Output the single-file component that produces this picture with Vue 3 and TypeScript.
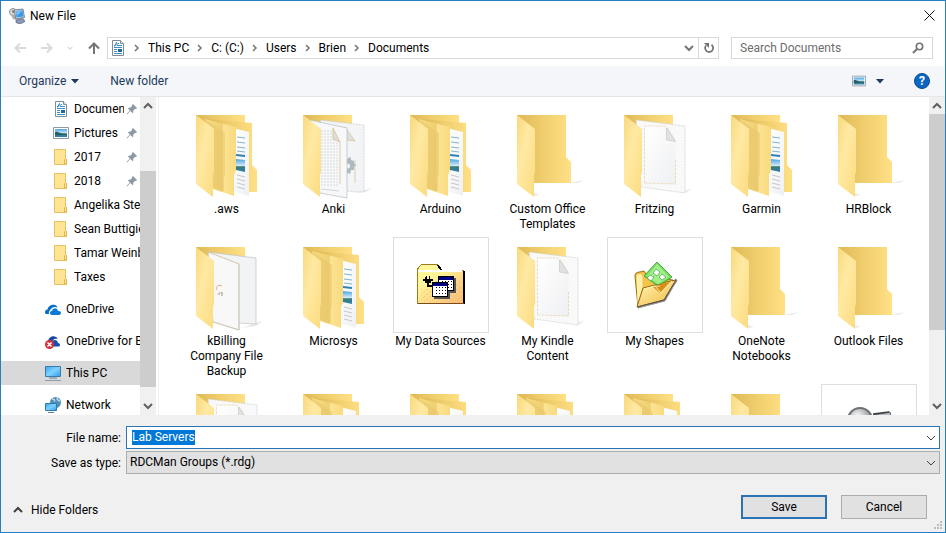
<script setup lang="ts">
import { nextTick, onMounted, ref } from 'vue'

type TreeIcon = 'document' | 'pictures' | 'folder' | 'onedrive' | 'onedrive-error' | 'pc' | 'network'
type FileIcon = 'docs' | 'pages' | 'empty' | 'sheet' | 'blank' | 'data' | 'shapes' | 'search'

interface TreeItem { name: string; icon: TreeIcon; pinned?: boolean; selected?: boolean }
interface FileItem { name: string; icon: FileIcon }

const crumbs: string[] = ['This PC', 'C: (C:)', 'Users', 'Brien', 'Documents']

const quickAccess: TreeItem[] = [
  { name: 'Documents', icon: 'document', pinned: true },
  { name: 'Pictures', icon: 'pictures', pinned: true },
  { name: '2017', icon: 'folder', pinned: true },
  { name: '2018', icon: 'folder', pinned: true },
  { name: 'Angelika Stein', icon: 'folder' },
  { name: 'Sean Buttigieg', icon: 'folder' },
  { name: 'Tamar Weinberg', icon: 'folder' },
  { name: 'Taxes', icon: 'folder' },
]

const places: TreeItem[] = [
  { name: 'OneDrive', icon: 'onedrive' },
  { name: 'OneDrive for Business', icon: 'onedrive-error' },
  { name: 'This PC', icon: 'pc', selected: true },
  { name: 'Network', icon: 'network' },
]

const files: FileItem[] = [
  { name: '.aws', icon: 'docs' },
  { name: 'Anki', icon: 'pages' },
  { name: 'Arduino', icon: 'docs' },
  { name: 'Custom Office Templates', icon: 'empty' },
  { name: 'Fritzing', icon: 'sheet' },
  { name: 'Garmin', icon: 'docs' },
  { name: 'HRBlock', icon: 'empty' },
  { name: 'kBilling Company File Backup', icon: 'blank' },
  { name: 'Microsys', icon: 'docs' },
  { name: 'My Data Sources', icon: 'data' },
  { name: 'My Kindle Content', icon: 'sheet' },
  { name: 'My Shapes', icon: 'shapes' },
  { name: 'OneNote Notebooks', icon: 'empty' },
  { name: 'Outlook Files', icon: 'empty' },
  { name: '', icon: 'sheet' },
  { name: '', icon: 'docs' },
  { name: '', icon: 'docs' },
  { name: '', icon: 'docs' },
  { name: '', icon: 'docs' },
  { name: '', icon: 'empty' },
  { name: '', icon: 'search' },
]

const framed = (icon: FileIcon): boolean => icon === 'data' || icon === 'shapes' || icon === 'search'

const fileName = ref('Lab Servers')
const query = ref('')
const nameInput = ref<HTMLInputElement | null>(null)

onMounted(async () => {
  await nextTick()
  nameInput.value?.focus()
  nameInput.value?.select()
})
</script>

<template>
  <div class="dialog">
    <svg class="defs" width="0" height="0" aria-hidden="true">
      <defs>
        <linearGradient id="flap" x1="0" y1="0" x2="1" y2="1">
          <stop offset="0" stop-color="#f8d97c" />
          <stop offset=".4" stop-color="#ffe9a3" />
          <stop offset="1" stop-color="#fbdb7f" />
        </linearGradient>
        <linearGradient id="back" x1="0" y1="0" x2="1" y2="0">
          <stop offset="0" stop-color="#dfb755" />
          <stop offset=".45" stop-color="#efcd6c" />
          <stop offset="1" stop-color="#ffe085" />
        </linearGradient>
        <linearGradient id="inner" x1="0" y1="0" x2="1" y2="0">
          <stop offset="0" stop-color="#f9dd84" />
          <stop offset=".55" stop-color="#eed073" />
          <stop offset=".6" stop-color="#fce394" />
          <stop offset="1" stop-color="#f9da7d" />
        </linearGradient>
        <linearGradient id="paper" x1="0" y1="0" x2="1" y2="1">
          <stop offset="0" stop-color="#ffffff" />
          <stop offset="1" stop-color="#eff0f2" />
        </linearGradient>
        <linearGradient id="photo" x1="0" y1="0" x2="0" y2="1">
          <stop offset="0" stop-color="#4ba4e4" />
          <stop offset=".5" stop-color="#cfe8f6" />
          <stop offset=".6" stop-color="#3c7a74" />
          <stop offset="1" stop-color="#2f81b4" />
        </linearGradient>
        <linearGradient id="screen" x1="0" y1="0" x2="1" y2="1">
          <stop offset="0" stop-color="#37a8ee" />
          <stop offset=".5" stop-color="#7fd2ff" />
          <stop offset="1" stop-color="#2e9ce8" />
        </linearGradient>
        <linearGradient id="gold" x1="0" y1="0" x2="1" y2="1">
          <stop offset="0" stop-color="#fff6bb" />
          <stop offset="1" stop-color="#f3b93c" />
        </linearGradient>
        <linearGradient id="manila" x1="0" y1="0" x2="1" y2="1">
          <stop offset=".3" stop-color="#fff79a" />
          <stop offset="1" stop-color="#f9b873" />
        </linearGradient>
        <radialGradient id="lens" cx=".4" cy=".35">
          <stop offset="0" stop-color="#ffffff" />
          <stop offset="1" stop-color="#9a9da2" />
        </radialGradient>
        <pattern id="dither" width="6" height="5" patternUnits="userSpaceOnUse">
          <path d="M0 0h1v1H0zM3 2h2v1H3zM1 4h1v1H1z" fill="#fbc08a" />
          <path d="M4 0h1v1H4zM1 2h1v1H1z" fill="#ffe07a" />
        </pattern>

        <symbol id="i-document" viewBox="0 0 16 16">
          <path d="M2.500.5h8l3 3v12h-11z" fill="#fff" stroke="#7f8b95" />
          <path d="M10.500.5v3h3" fill="#e5eaee" stroke="#7f8b95" />
          <path d="M4 5.500h1.500M8 3.500h1M8 5.500h4M4 7.500h8M4 9.500h3M4 11.500h3M4 13.500h8" stroke="#3e8fc5" />
          <path d="M4.500 6.500L6.500 2.500 7.500 6" fill="none" stroke="#1d86d6" />
          <path d="M8 9h4v3H8z" fill="#1c6d9e" />
        </symbol>
        <symbol id="i-pictures" viewBox="0 0 16 16">
          <path d="M.5 2.500h15v11H.5z" fill="#fff" stroke="#8e9aa3" />
          <path d="M2 4h12v8H2z" fill="url(#photo)" />
          <path d="M2 7c3-1 4 2 12 2v1c-6-1-8 1-12 0z" fill="#25606a" />
        </symbol>
        <symbol id="i-folder" viewBox="0 0 16 16">
          <path d="M1.500.5h11v9l1 1v5h-12z" fill="#ffe493" stroke="#e4c062" />
          <path d="M11.500 15v-4.500l1-1 1 1V15z" fill="#ffe493" stroke="#dfb751" />
        </symbol>
        <symbol id="i-onedrive" viewBox="0 0 16 16">
          <path d="M0 11.500c0-2 1-3 2.500-3C3 5 7 3 10 4c1.500.5 2 1.500 2.500 2.500C9 5 6 7 5 9.500 4 10 3.500 12 4.200 13H2C.8 13 0 12.500 0 11.500z" fill="#0a6fc7" />
          <path d="M5 12c0-1.500 1-2 2-2 .5-3 5-4 6 0 2-.3 3 .7 3 1.800 0 1.200-.8 2.200-2 2.200H7c-1.200 0-2-.7-2-2z" fill="#0f7ad6" />
        </symbol>
        <symbol id="i-onedrive-error" viewBox="0 0 16 16">
          <path d="M3 9c0-4 4-7 8-5 1 .5 1.500 1 1.500 2C9 5 8 7 7 9z" fill="#17489c" />
          <path d="M6 12c0-5 6-7 7-2 1.500.2 2 1 2 2s-.7 1.500-2 1.500H7z" fill="#174fae" />
          <circle cx="4.500" cy="11.500" r="4.500" fill="#d42f38" />
          <path d="M2.500 9.500l4 4m0-4l-4 4" stroke="#fff" stroke-width="1.500" />
        </symbol>
        <symbol id="i-pc" viewBox="0 0 16 16">
          <path d="M.5 1.500h15v10H.5z" fill="url(#screen)" stroke="#3c7ba8" />
          <path d="M4 13h8" stroke="#5d8299" />
          <path d="M0 15.500h16" stroke="#8aa0ae" />
        </symbol>
        <symbol id="i-network" viewBox="0 0 16 16">
          <circle cx="10.500" cy="5.500" r="5.500" fill="#4f8fb8" />
          <path d="M7 2c2 0 3 1 2.500 2.500M12 1c0 1.500 1 2.500 3 3" fill="none" stroke="#bcd9e6" stroke-width="1.500" />
          <path d="M.5 6.500h11v7H.5z" fill="url(#screen)" stroke="#3279a8" />
          <path d="M3 15.500h6" stroke="#5d8299" />
        </symbol>
        <symbol id="i-pin" viewBox="0 0 12 12">
          <path d="M7 1l4 4-1 1-.8-.2-2 2c.3 1 .1 1.800-.5 2.500L4.500 8 1 11.500.5 11 4 7.500 1.700 5.300c.8-.7 1.600-.8 2.500-.5l2-2L6 2z" fill="#8d99a6" />
        </symbol>
        <symbol id="i-down" viewBox="0 0 10 10">
          <path d="M1 3l4 4 4-4" fill="none" stroke="currentColor" stroke-width="2" />
        </symbol>
        <symbol id="i-thin-down" viewBox="0 0 10 10">
          <path d="M1 3l4 4 4-4" fill="none" stroke="currentColor" />
        </symbol>
        <symbol id="i-up" viewBox="0 0 10 10">
          <path d="M1 7l4-4 4 4" fill="none" stroke="currentColor" stroke-width="2" />
        </symbol>
        <symbol id="i-right" viewBox="0 0 6 10">
          <path d="M1 2l3 3-3 3" fill="none" stroke="currentColor" stroke-width="1.500" />
        </symbol>
        <symbol id="i-triangle" viewBox="0 0 8 5">
          <path d="M0 0h8L4 4.500z" fill="currentColor" />
        </symbol>

        <symbol id="f-empty" viewBox="0 0 96 96">
          <path d="M70 78l14-3-6 3zM34 91l6-1-6-2z" fill="#e9e9e9" />
          <path d="M17 10h49v42l5 5v21H34L17 20z" fill="url(#back)" />
          <path d="M17 10l18 14v43l-1 3v22L17 79z" fill="url(#flap)" />
        </symbol>
        <symbol id="f-docs" viewBox="0 0 96 96">
          <path d="M17 10h49v50H30z" fill="url(#back)" />
          <path d="M28 14l45 4v42l5 5v22H60z" fill="url(#back)" />
          <path d="M54 23l16 4v64l-16-5z" fill="url(#paper)" />
          <path d="M58 32l8 1M58 37l8 1M58 42l8 1M58 46l8 1" stroke="#7fb3d4" />
          <path d="M57 50l9 1" stroke="#2e82b8" stroke-width="2" />
          <path d="M57 54l9 1v12l-9-2z" fill="url(#photo)" />
          <path d="M58 70l8 2M58 74l8 2M58 78l8 2M58 82l8 2" stroke="#c5c8cc" />
          <path d="M26 14l31 8v43l-2 5v21l-21-7z" fill="url(#inner)" />
          <path d="M26 14l20 14v41l-1 3v14l-11-3z" fill="#e6c465" opacity=".5" />
          <path d="M17 10l18 14v43l-1 3v22L17 79z" fill="url(#flap)" />
        </symbol>
        <symbol id="f-sheet" viewBox="0 0 96 96">
          <path d="M76 86l9-3-6 5z" fill="#ececec" />
          <path d="M17 10h49v60H30z" fill="url(#back)" />
          <path d="M29 15l49 6v67l-44-6z" fill="#f9f9f9" stroke="#c9cbcd" stroke-dasharray="2 1" stroke-width=".7" />
          <path d="M37.500 21l22 1 9 14v43l-31-1z" fill="url(#paper)" />
          <path d="M37.500 78V21h20l4 3 7 12M68.500 55v24M37.500 78l31 1" fill="none" stroke="#e0cc9c" stroke-dasharray="3 1" stroke-width=".6" />
          <path d="M59.500 23l9 13.500-9-1.500z" fill="#e2e2e4" stroke="#b9babc" stroke-width=".5" />
          <path d="M17 10l18 14v43l-1 3v22L17 79z" fill="url(#flap)" />
        </symbol>
        <symbol id="f-pages" viewBox="0 0 96 96">
          <path d="M76 86l10-3-6 4-14 1z" fill="#e9e9e9" />
          <path d="M17 10h49v60H30z" fill="url(#back)" />
          <path d="M34 15l44 5v67l-20-1z" fill="#f3f4f6" stroke="#c5c7ca" stroke-dasharray="2 1" stroke-width=".7" />
          <path d="M59 22l10 14-8-1zM69 55v23" fill="#dddee0" stroke="#d9c28b" stroke-width=".7" />
          <path d="M60 53l2 1 1-2 2 1v2l3 1v2l2 2-2 2v3l-3 0-1 4-2-1-2 2z" fill="#aebac2" />
          <circle cx="61.500" cy="61" r="2.500" fill="#f3f4f6" />
          <path d="M24 15l37 8v70l-27-5z" fill="#f7f8f9" stroke="#b8bbbe" stroke-width=".7" />
          <path d="M35 26h13M35 29h13M35 32h13M35 35h14M35 38h18M35 41h18M35 44h18M35 47h18M35 50h18M35 53h18M35 56h18M35 59h18M35 62h18M35 65h18M35 68h18M35 71h18M35 74h18M35 77h18M35 80h18" stroke="#d6d8da" stroke-dasharray="2 1" />
          <path d="M35 84l18 2" stroke="#d4d4d4" />
          <path d="M47 23l7 14-7-3zM54 37v42" fill="#dcdddf" stroke="#d5bc7c" stroke-width=".7" />
          <path d="M17 10l18 14v43l-1 3v22L17 79z" fill="url(#flap)" />
        </symbol>
        <symbol id="f-blank" viewBox="0 0 96 96">
          <path d="M76 86l8-2-7 5-14 2z" fill="#e9e9e9" />
          <path d="M17 10h49v60H30z" fill="url(#back)" />
          <path d="M29 15l48 6v66l-18-1z" fill="#f2f3f4" stroke="#bfc1c4" stroke-width=".7" />
          <path d="M29 15l31 12v66l-26-8z" fill="#f8f8f9" stroke="#d4c7a6" />
          <path d="M60 28v65l-25-8" fill="none" stroke="#c8cacc" stroke-width=".7" />
          <path d="M38 53c-2-4 3-6 5-4M39 58c0-3 3-3 4-1" fill="none" stroke="#e8ad74" />
          <path d="M40 57h1m1 1h2m-1-3v2" stroke="#999" />
          <path d="M17 10l18 14v43l-1 3v22L17 79z" fill="url(#flap)" />
        </symbol>
        <symbol id="f-data" viewBox="0 0 96 96">
          <g shape-rendering="crispEdges">
            <path d="M26 35h46v32H26z" fill="#000" />
            <path d="M24 66V33l2-3 2-2 2-1h13l3 2 2 4h22v33z" fill="url(#manila)" stroke="#9c7c20" />
            <path d="M45 28l3 5M71 34v32" fill="none" stroke="#000" stroke-width="2" />
            <path d="M25 66h46" stroke="#7a4b18" />
            <path d="M28 52h12v-9h29v22H28z" fill="url(#dither)" />
            <path d="M25 34h44" stroke="#fff" stroke-width="2" />
            <path d="M33 39h1v3h2v-3h1v3h3v2h-2v2h-2v2h3v2h-5v-4h-2v-2h-2v-2h2z" fill="#000" />
            <path d="M47 41h16v15H47zM41 47h16v15H41z" fill="#555" />
            <path d="M45 39h16v15H45z" fill="#000" />
            <path d="M46 43h14v10H46z" fill="#fff" />
            <path d="M46 40h14v3H46z" fill="#000084" />
            <path d="M49 44v9m3-9v9m3-9v9m3-9v9" stroke="#000" stroke-dasharray="1 2" />
            <path d="M39 45h16v15H39z" fill="#000" />
            <path d="M40 49h14v10H40z" fill="#fff" />
            <path d="M40 46h14v3H40z" fill="#000084" />
            <path d="M43 50v9m3-9v9m3-9v9m3-9v9" stroke="#000" stroke-dasharray="1 2" />
          </g>
        </symbol>
        <symbol id="f-shapes" viewBox="0 0 96 96">
          <path d="M31 71l27-7 12-21-2-1 2 2-13 18z" fill="#777" stroke="#999" />
          <path d="M28 39c0-3 2-4 5-4l4-1 4 6 25 3-11 18-24 9z" fill="#f2c44c" stroke="#9a6a14" />
          <path d="M29.500 40c0-2 1-3 4-3l2 2v11l-5 17z" fill="#fff0a9" />
          <path d="M50 25l15 15-14 9-14-10z" fill="#79db64" stroke="#45ad3a" />
          <path d="M50 27l12 13-11 7-11-8z" fill="#a1ef8a" />
          <path d="M49 32l4 3-3 4-4-3zM43 38l4 2-3 4-4-3zM55 37l4 3-4 3-3-3z" fill="#fff" stroke="#44a83b" stroke-width=".7" />
          <path d="M36 51l12-3 5 0 6-3 10-2-12 20-27 7z" fill="url(#gold)" stroke="#96640d" />
          <path d="M45 49l8 7 10-11-7 1-4 4z" fill="#d98e16" />
          <path d="M37 52l11-3 6 7 11-12" fill="none" stroke="#fff5b4" />
          <path d="M30 70l27-7 12-20" fill="none" stroke="#555" />
        </symbol>
        <symbol id="f-search" viewBox="0 0 96 96">
          <circle cx="39" cy="36" r="12" fill="url(#lens)" stroke="#6d7075" stroke-width="2" />
          <path d="M52 31l17-3 1 4-18 9z" fill="#b8bcc4" stroke="#5d6168" />
          <path d="M52 30l16-2" stroke="#383c43" stroke-width="1.500" />
        </symbol>
      </defs>
    </svg>

    <header class="titlebar">
      <svg class="app-icon" viewBox="0 0 16 16" aria-hidden="true">
        <circle cx="4" cy="4" r="3.500" fill="#d9dadb" stroke="#8d9093" />
        <path d="M2 7l2 4 3 1V7z" fill="#aaaeb2" />
        <circle cx="4.500" cy="3.500" r="1.500" fill="#777b80" />
        <path d="M5 2l9-1 1.500 8.500L7 11z" fill="#cfd6de" stroke="#7c8894" />
        <path d="M6.500 3l7-.8 1 6.300-7 1z" fill="#3c96ea" />
        <path d="M7 3.500l6-.8-5 5z" fill="#7cc6fb" />
        <path d="M7 12l7-1.500 2 3-5 2.500-4-1.500z" fill="#8c98b8" stroke="#54617f" stroke-width=".7" />
      </svg>
      <h1>New File</h1>
      <button class="close" type="button" aria-label="Close">
        <svg viewBox="0 0 11 11"><path d="M.5.5l10 10m0-10l-10 10" stroke="#111" /></svg>
      </button>
    </header>

    <nav class="navrow" aria-label="Location">
      <div class="history">
        <button type="button" aria-label="Back" disabled>
          <svg class="arrow" viewBox="0 0 12 12"><path d="M12 6H1.500M6 1.500L1.500 6 6 10.500" /></svg>
        </button>
        <button type="button" aria-label="Forward" disabled>
          <svg class="arrow" viewBox="0 0 12 12"><path d="M0 6h10.500M6 1.500L10.500 6 6 10.500" /></svg>
        </button>
        <button type="button" aria-label="Recent locations" disabled>
          <svg class="recent"><use href="#i-down" /></svg>
        </button>
        <button class="up" type="button" aria-label="Up">
          <svg class="arrow" viewBox="0 0 12 12"><path d="M6 12V1.500M1 6.500l5-5 5 5" /></svg>
        </button>
      </div>
      <div class="address">
        <svg class="icon16"><use href="#i-document" /></svg>
        <template v-for="crumb in crumbs" :key="crumb">
          <svg class="sep"><use href="#i-right" /></svg>
          <button type="button">{{ crumb }}</button>
        </template>
        <button class="drop" type="button" aria-label="Previous locations">
          <svg class="chev"><use href="#i-down" /></svg>
        </button>
        <button class="refresh" type="button" aria-label="Refresh">
          <svg viewBox="0 0 12 12">
            <path d="M8.500 2.800A4 4 0 1 1 3 3.500" fill="none" stroke="#757575" stroke-width="1.800" />
            <path d="M1 1h5v5z" fill="#757575" />
          </svg>
        </button>
      </div>
      <label class="search">
        <input v-model="query" type="text" placeholder="Search Documents" aria-label="Search Documents" />
        <svg viewBox="0 0 12 12" aria-hidden="true">
          <circle cx="7.500" cy="4.500" r="3.200" fill="none" stroke="#757575" stroke-width="1.600" />
          <path d="M5.300 6.700L1 11" stroke="#757575" stroke-width="2" />
        </svg>
      </label>
    </nav>

    <div class="toolbar">
      <button type="button">Organize <svg class="tri"><use href="#i-triangle" /></svg></button>
      <button type="button">New folder</button>
      <div class="tools">
        <button type="button" aria-label="Change your view">
          <svg class="view-icon"><use href="#i-pictures" /></svg>
          <svg class="tri"><use href="#i-triangle" /></svg>
        </button>
        <button class="help" type="button" aria-label="Help">?</button>
      </div>
    </div>

    <main class="browser">
      <aside class="tree">
        <ul class="quick">
          <li v-for="item in quickAccess" :key="item.name">
            <a href="#">
              <svg class="icon16"><use :href="`#i-${item.icon}`" /></svg>
              <span>{{ item.name }}</span>
              <svg v-if="item.pinned" class="pin"><use href="#i-pin" /></svg>
            </a>
          </li>
        </ul>
        <ul class="places">
          <li v-for="item in places" :key="item.name" :class="{ selected: item.selected }">
            <a href="#">
              <svg class="icon16"><use :href="`#i-${item.icon}`" /></svg>
              <span>{{ item.name }}</span>
            </a>
          </li>
        </ul>
      </aside>
      <div class="scrollbar tree-scroll">
        <svg class="chev"><use href="#i-up" /></svg>
        <div class="track"><div class="thumb"></div></div>
        <svg class="chev"><use href="#i-down" /></svg>
      </div>
      <section class="files" aria-label="Documents">
        <button v-for="(file, i) in files" :key="i" class="file" type="button">
          <svg class="thumbnail" :class="{ framed: framed(file.icon) }"><use :href="`#f-${file.icon}`" /></svg>
          <span>{{ file.name }}</span>
        </button>
      </section>
      <div class="scrollbar">
        <svg class="chev"><use href="#i-up" /></svg>
        <div class="track"><div class="thumb"></div></div>
        <svg class="chev"><use href="#i-down" /></svg>
      </div>
    </main>

    <footer class="footer">
      <div class="field">
        <label for="file-name">File name:</label>
        <div class="combo active">
          <input id="file-name" ref="nameInput" v-model="fileName" type="text" />
          <svg class="chev"><use href="#i-thin-down" /></svg>
        </div>
      </div>
      <div class="field">
        <label for="file-type">Save as type:</label>
        <div class="combo">
          <select id="file-type">
            <option>RDCMan Groups (*.rdg)</option>
          </select>
          <svg class="chev"><use href="#i-thin-down" /></svg>
        </div>
      </div>
      <div class="actions">
        <button class="hide" type="button"><svg class="chev"><use href="#i-up" /></svg>Hide Folders</button>
        <button class="push primary" type="button">Save</button>
        <button class="push" type="button">Cancel</button>
      </div>
      <svg class="grip" viewBox="0 0 9 9" aria-hidden="true">
        <path d="M6 0h2v2H6zM3 3h2v2H3zM6 3h2v2H6zM0 6h2v2H0zM3 6h2v2H3zM6 6h2v2H6z" fill="#bdbdbd" />
      </svg>
    </footer>
  </div>
</template>

<style>
body {
  margin: 0;
  background: #fff;
}
</style>

<style scoped>
.dialog {
  box-sizing: border-box;
  height: 100vh;
  display: flex;
  flex-direction: column;
  overflow: hidden;
  border: 1px solid #267fc2;
  background: #fff;
  color: #000;
  font: 12px/15px Roboto, "Open Sans", sans-serif;
}
.dialog * {
  box-sizing: border-box;
}
.defs {
  position: absolute;
}
svg {
  display: block;
  flex: none;
}
button,
input,
select {
  font: inherit;
  color: inherit;
  margin: 0;
  padding: 0;
  border: 0;
  background: none;
}
a {
  color: inherit;
  text-decoration: none;
}
ul {
  list-style: none;
  margin: 0;
  padding: 0;
}
.icon16 {
  width: 16px;
  height: 16px;
}
.chev {
  width: 10px;
  height: 10px;
}

.titlebar {
  display: flex;
  align-items: center;
  gap: 5px;
  height: 29px;
  flex: none;
  padding: 0 10px 0 8px;
}
.app-icon {
  width: 16px;
  height: 16px;
}
.titlebar h1 {
  flex: 1;
  margin: 0;
  padding-top: 2px;
  font: inherit;
}
.close svg {
  width: 11px;
  height: 11px;
}

.navrow {
  display: flex;
  align-items: center;
  height: 36px;
  flex: none;
  padding: 0 12px 0 13px;
}
.history {
  display: flex;
  align-items: center;
  justify-content: space-between;
  width: 86px;
  margin-right: 7px;
  color: #d9d9d9;
}
.arrow {
  width: 12px;
  height: 12px;
  fill: none;
  stroke: currentColor;
  stroke-width: 2;
}
.recent {
  width: 6px;
  height: 6px;
}
.up {
  color: #757575;
}
.address {
  display: flex;
  align-items: center;
  gap: 8px;
  flex: 1;
  height: 22px;
  padding-left: 2px;
  border: 1px solid #d9d9d9;
}
.sep {
  width: 6px;
  height: 10px;
  color: #757575;
}
.drop {
  margin-left: auto;
  color: #757575;
}
.refresh {
  align-self: stretch;
  display: flex;
  align-items: center;
  justify-content: center;
  width: 20px;
  margin-left: -4px;
  border-left: 1px solid #d9d9d9;
}
.refresh svg {
  width: 12px;
  height: 12px;
}
.search {
  display: flex;
  align-items: center;
  width: 202px;
  height: 22px;
  margin-left: 12px;
  padding: 0 8px;
  border: 1px solid #d9d9d9;
}
.search input {
  flex: 1;
  min-width: 0;
  outline: 0;
}
.search input::placeholder {
  color: #6d6d6d;
  opacity: 1;
}
.search svg {
  width: 12px;
  height: 12px;
}

.toolbar {
  display: flex;
  align-items: center;
  gap: 31px;
  height: 31px;
  flex: none;
  padding: 0 15px 0 18px;
  border-bottom: 1px solid #e4e7ea;
  background: #f4f6f9;
  color: #1e395b;
}
.toolbar button {
  display: flex;
  align-items: center;
  gap: 5px;
}
.tri {
  width: 8px;
  height: 5px;
}
.tools {
  display: flex;
  align-items: center;
  gap: 30px;
  margin-left: auto;
}
.tools button {
  gap: 10px;
}
.view-icon {
  width: 14px;
  height: 14px;
}
.toolbar .help {
  justify-content: center;
  width: 16px;
  height: 16px;
  border: 1px solid #084f94;
  border-radius: 50%;
  background: #0a66c2;
  color: #fff;
  font-weight: 700;
}

.browser {
  display: flex;
  flex: 1;
  min-height: 0;
}
.tree {
  width: 139px;
  flex: none;
  overflow: hidden;
}
.tree a {
  display: flex;
  align-items: center;
  gap: 5px;
  height: 24px;
  white-space: nowrap;
}
.tree span {
  flex: 1;
  min-width: 0;
  overflow: hidden;
}
.quick a {
  padding-left: 52px;
}
.pin {
  width: 12px;
  height: 12px;
  margin: 0 2px 0 -3px;
}
.places {
  display: grid;
  gap: 8px;
  padding-top: 8px;
}
.places a {
  padding-left: 44px;
}
.selected {
  background: #d9d9d9;
}
.scrollbar {
  display: flex;
  flex-direction: column;
  align-items: center;
  justify-content: space-between;
  width: 16px;
  flex: none;
  padding: 4px 0;
  background: #f0f0f0;
  color: #606060;
}
.track {
  flex: 1;
  width: 100%;
  margin: 3px 0;
}
.thumb {
  height: 76%;
  background: #cdcdcd;
}
.tree-scroll {
  margin-right: 2px;
}
.tree-scroll .track {
  display: flex;
  flex-direction: column;
  justify-content: flex-end;
  padding-bottom: 11px;
}
.tree-scroll .thumb {
  height: 79%;
}
.files {
  display: grid;
  grid-template-columns: repeat(auto-fill, 107px);
  align-content: start;
  gap: 5px 0;
  flex: 1;
  overflow: hidden;
  padding: 8px 0 0 14px;
  border-left: 1px solid #f0f0f0;
}
.file {
  display: flex;
  flex-direction: column;
  align-items: center;
  justify-content: flex-start;
  gap: 1px;
  line-height: 15px;
}
.file span {
  max-width: 84px;
  min-height: 15px;
}
.thumbnail {
  width: 96px;
  height: 96px;
}
.framed {
  outline: 1px solid #dedede;
  outline-offset: -1px;
}
.framed + span {
  max-width: none;
}

.footer {
  position: relative;
  flex: none;
  padding: 11px 5px 13px;
  background: #f0f0f0;
}
.field {
  display: flex;
  align-items: center;
  margin-bottom: 2px;
}
.field label {
  width: 115px;
  margin-right: 5px;
  padding-top: 2px;
  text-align: right;
}
.combo {
  display: flex;
  align-items: center;
  flex: 1;
  height: 23px;
  padding: 0 3px;
  border: 1px solid #adadad;
  background: #e1e1e1;
  color: #404040;
}
.combo.active {
  border-color: #2a73b5;
  background: #fff;
}
.combo input,
.combo select {
  flex: 1;
  min-width: 0;
  outline: 0;
  appearance: none;
  color: #000;
}
.combo input {
  padding-left: 2px;
}
.combo input::selection {
  background: #0078d7;
  color: #fff;
}
.actions {
  display: flex;
  align-items: center;
  gap: 14px;
  margin-top: 21px;
  padding: 0 13px 0 7px;
}
.hide {
  display: flex;
  align-items: center;
  gap: 8px;
  margin-right: auto;
  margin-top: 6px;
}
.hide .chev {
  color: #404040;
}
.push {
  width: 86px;
  height: 24px;
  border: 1px solid #adadad;
  background: #e1e1e1;
}
.primary {
  border: 2px solid #2a73b5;
}
.grip {
  position: absolute;
  right: 2px;
  bottom: 2px;
  width: 9px;
  height: 9px;
}
</style>
